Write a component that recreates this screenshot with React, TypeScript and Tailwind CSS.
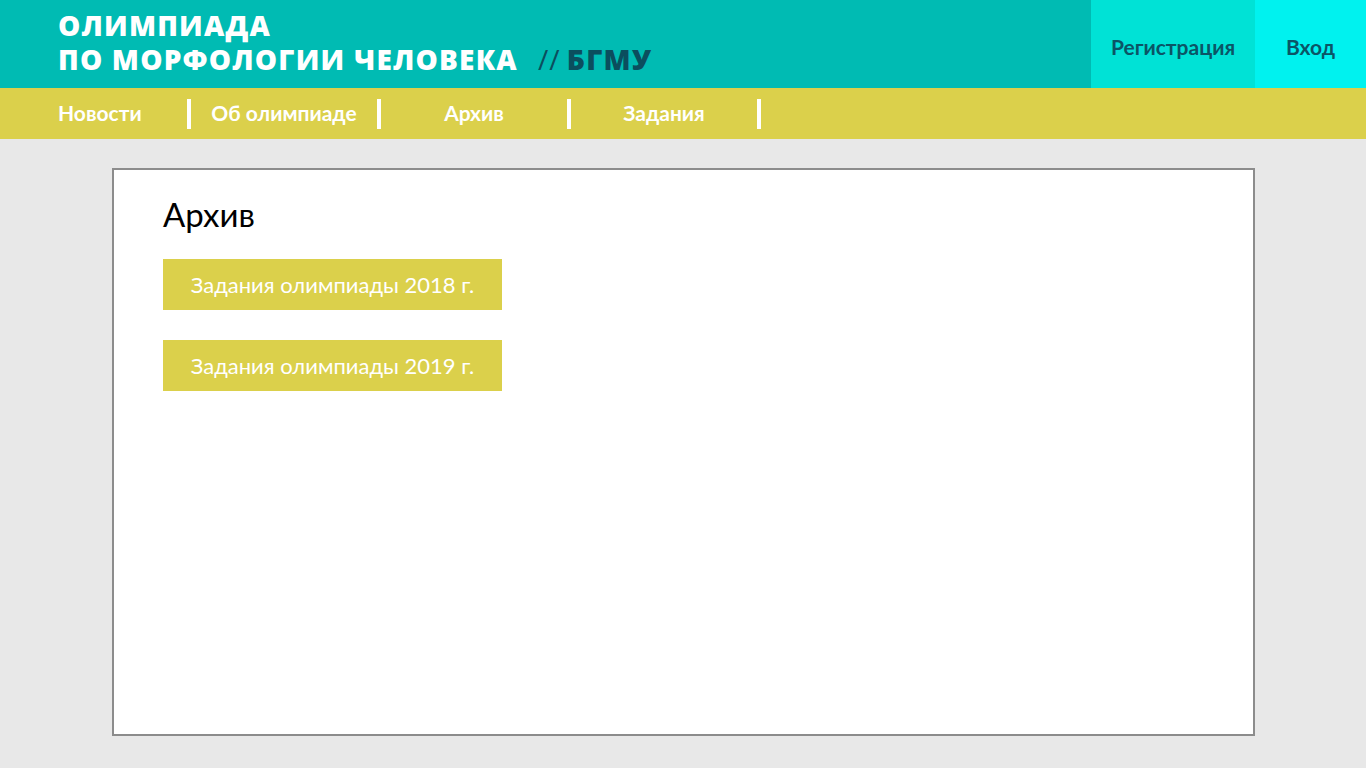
const navItems = ["Об олимпиаде", "Архив", "Задания"];

function Header() {
  return (
    <header className="flex h-[88px] bg-[#00bbb3]">
      <div className="flex flex-1 flex-col pl-[58px] pt-[8px] font-['Open_Sans',sans-serif] text-[28px] font-extrabold uppercase leading-[34px] tracking-[1.2px] text-white">
        <div>Олимпиада</div>
        <div className="flex items-baseline">
          <span>По морфологии человека</span>
          <span className="ml-[20px] font-normal text-[#0b4e5e]">//</span>
          <span className="ml-[6px] text-[#0b4e5e]">БГМУ</span>
        </div>
      </div>
      <a className="flex w-[164px] items-center justify-center pt-[6px] font-['Lato',sans-serif] text-[21px] font-bold text-[#0b5566] bg-[#00e2d6]">
        Регистрация
      </a>
      <a className="flex w-[111px] items-center justify-center pt-[6px] font-['Lato',sans-serif] text-[21px] font-bold text-[#0b5566] bg-[#00f2ef]">
        Вход
      </a>
    </header>
  );
}

function NavBar() {
  return (
    <nav className="flex h-[51px] items-center bg-[#dbd04b] font-['Lato',sans-serif] text-[21px] font-bold text-white">
      <div className="flex w-[187px] items-center pl-[58px] pb-[2px]">Новости</div>
      {navItems.map((item) => (
        <div key={item} className="flex items-center">
          <span className="h-[30px] w-[4px] bg-white" />
          <span className="w-[186px] pb-[2px] text-center">{item}</span>
        </div>
      ))}
      <span className="h-[30px] w-[4px] bg-white" />
    </nav>
  );
}

export default function App() {
  return (
    <div className="min-h-[768px] bg-[#e8e8e8]">
      <Header />
      <NavBar />
      <main className="px-[112px] pt-[29px] pb-[32px]">
        <section className="h-[568px] w-[1143px] border-2 border-[#8c8c8c] bg-white px-[49px] pt-[24px] font-['Lato',sans-serif]">
          <h1 className="text-[33px] leading-[40px] text-black">Архив</h1>
          <div className="mt-[25px] flex flex-col gap-[30px]">
            {["2018", "2019"].map((y) => (
              <a
                key={y}
                className="flex h-[51px] w-[339px] items-center justify-center bg-[#dbd04b] text-[22px] text-white"
              >
                Задания олимпиады {y} г.
              </a>
            ))}
          </div>
        </section>
      </main>
    </div>
  );
}
